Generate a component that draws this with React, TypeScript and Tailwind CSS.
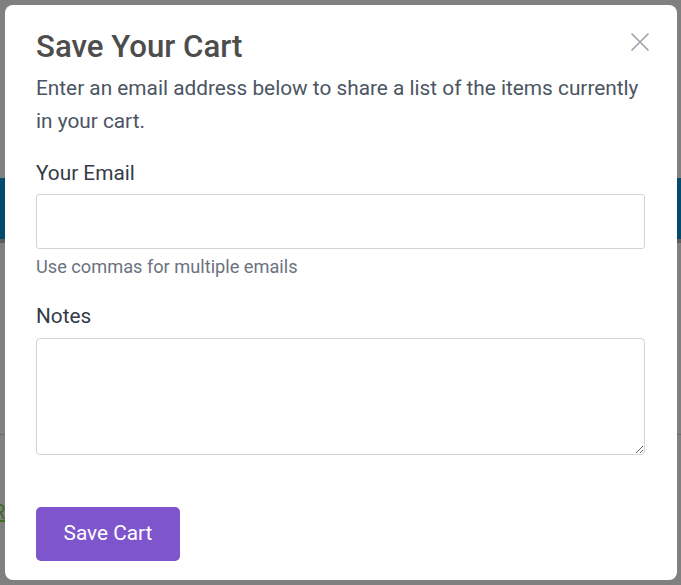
export default function App() {
  return (
    <div className="relative h-[585px] w-[681px] overflow-hidden bg-[#808080] font-['Roboto',sans-serif]">
      {/* ── Dimmed page behind the dialog ── */}
      <div className="flex flex-col">
        <div className="h-[178px]" />
        <div className="h-[61px] bg-[#024b6e]" />
        <div className="h-[4px] bg-[#5e5e5e]" />
        <div className="h-[192px] border-b border-[#6c6c6c]" />
        <div className="-ml-[7px] mt-[62px] text-[20px] text-[#3f6b27] underline">R</div>
      </div>

      {/* ── Save cart dialog ── */}
      <div className="absolute left-[5px] top-[5px] flex h-[575px] w-[672px] flex-col rounded-[8px] bg-white pl-[31px] pr-[32px] pt-[23px]">
        <button className="absolute right-[27px] top-[27px] h-5 w-5 text-[#9aa0a9]" aria-label="Close">
          <svg viewBox="0 0 20 20" className="h-5 w-5" fill="none" stroke="currentColor" strokeWidth="1.6">
            <path d="M1.5 1.5L18.5 18.5M18.5 1.5L1.5 18.5" />
          </svg>
        </button>

        <h2 className="text-[31.2px] font-medium leading-[38px] text-[#4d4d4d]">Save Your Cart</h2>
        <p className="mt-[6px] text-[20.8px] leading-[33px] text-[#4b5563]">
          Enter an email address below to share a list of the items currently in your cart.
        </p>

        <label className="mt-[20px] text-[20.8px] leading-[30px] text-[#343b47]">Your Email</label>
        <input
          type="text"
          className="mt-[6px] h-[55px] w-full rounded-[3px] border border-[#d2d3db] px-3 text-[20px] outline-none"
        />
        <p className="mt-[5px] text-[18.2px] leading-[26px] text-[#6b7280]">Use commas for multiple emails</p>

        <label className="mt-[21px] text-[20.8px] leading-[30px] text-[#343b47]">Notes</label>
        <textarea className="mt-[7px] h-[117px] w-full rounded-[4px] border border-[#d2d3db] px-3 py-2 text-[20px] outline-none" />

        <div className="mt-[52px]">
          <button className="h-[54px] w-[144px] rounded-[5px] bg-[#7e55cc] text-[20.8px] text-white">Save Cart</button>
        </div>
      </div>
    </div>
  )
}
